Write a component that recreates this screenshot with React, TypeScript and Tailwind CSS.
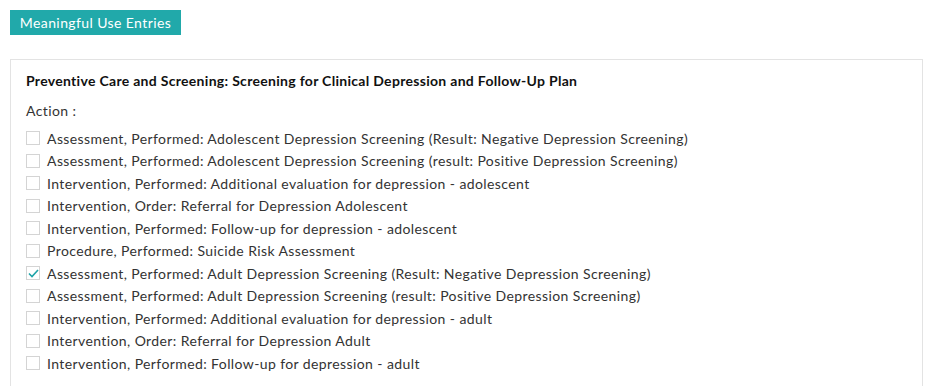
import React, { useState } from "react";

const actions = [
  "Assessment, Performed: Adolescent Depression Screening (Result: Negative Depression Screening)",
  "Assessment, Performed: Adolescent Depression Screening (result: Positive Depression Screening)",
  "Intervention, Performed: Additional evaluation for depression - adolescent",
  "Intervention, Order: Referral for Depression Adolescent",
  "Intervention, Performed: Follow-up for depression - adolescent",
  "Procedure, Performed: Suicide Risk Assessment",
  "Assessment, Performed: Adult Depression Screening (Result: Negative Depression Screening)",
  "Assessment, Performed: Adult Depression Screening (result: Positive Depression Screening)",
  "Intervention, Performed: Additional evaluation for depression - adult",
  "Intervention, Order: Referral for Depression Adult",
  "Intervention, Performed: Follow-up for depression - adult",
];

function Check({ checked }: { checked: boolean }) {
  return (
    <span className="flex h-[14px] w-[14px] shrink-0 items-center justify-center border border-[#d4d4d4] bg-white">
      {checked ? (
        <svg width="11" height="9" viewBox="0 0 11 9" fill="none">
          <path d="M1 4.5 L4 7.5 L10 1" stroke="#1fa3a8" strokeWidth="1.6" />
        </svg>
      ) : null}
    </span>
  );
}

export default function App() {
  const [selected, setSelected] = useState<number[]>([6]);

  const toggle = (index: number) => () => {
    setSelected((prev) =>
      prev.includes(index) ? prev.filter((i) => i !== index) : [...prev, index]
    );
  };

  return (
    <main className="min-h-screen bg-white px-[10px] pt-[10px] font-['Lato',sans-serif] text-[#333]">
      <button className="flex h-[25px] w-[171px] items-center justify-center bg-[#21a9aa] text-[14px] tracking-[0.4px] text-white">
        Meaningful Use Entries
      </button>
      <section className="mt-[24px] h-[340px] w-[913px] border border-b-0 border-[#e3e3e3] pl-[15px] pt-[13px]">
        <h2 className="text-[14px] font-bold leading-[16px] tracking-[0.3px] text-[#111]">
          Preventive Care and Screening: Screening for Clinical Depression and
          Follow-Up Plan
        </h2>
        <p className="mt-[14px] text-[14px] leading-[16px] tracking-[0.4px]">
          Action :
        </p>
        <ul className="mt-[8px] flex flex-col">
          {actions.map((label, index) => (
            <li
              key={index}
              onClick={toggle(index)}
              className="flex h-[22.5px] cursor-pointer items-center gap-[7px] text-[14px] tracking-[0.4px]"
            >
              <Check checked={selected.includes(index)} />
              <span>{label}</span>
            </li>
          ))}
        </ul>
      </section>
    </main>
  );
}
